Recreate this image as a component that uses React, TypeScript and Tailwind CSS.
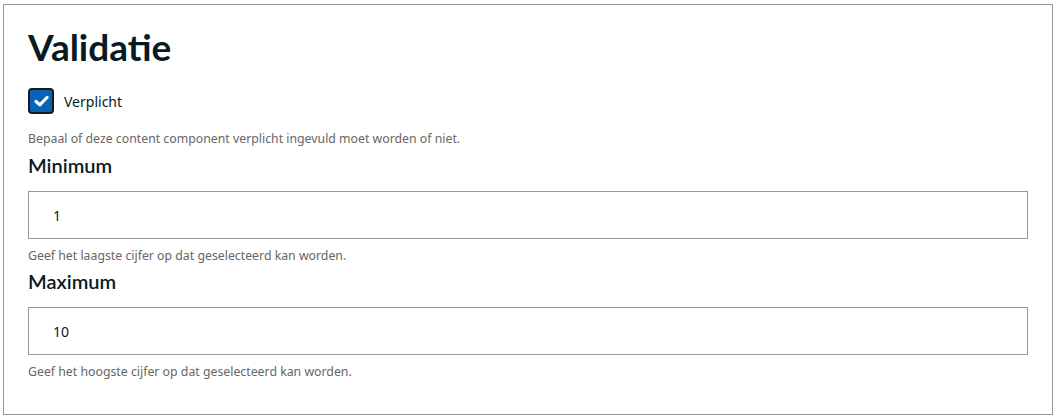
import React from "react";

function Check() {
  return (
    <span className="flex h-[26px] w-[26px] items-center justify-center rounded-[4px] border-2 border-[#1a1a1a] bg-[#0863b6]">
      <svg width="15" height="12" viewBox="0 0 15 12" fill="none">
        <path d="M2 6.5 L5.8 9.8 L13 2.5" stroke="#fff" strokeWidth="3.2" strokeLinecap="round" strokeLinejoin="round" />
      </svg>
    </span>
  );
}

function Field({ label, value, help }: { label: string; value: string; help: string }) {
  return (
    <div>
      <div className="h-[24px] text-[20px] font-semibold leading-[24px] text-[#0a1a24] [font-family:Lato,sans-serif]">{label}</div>
      <div className="mt-[14px] flex h-[48px] w-[1000px] items-center border border-[#999] pl-[24px] text-[14px] text-[#0a1a24] [font-family:'Noto_Sans',sans-serif]">
        {value}
      </div>
      <div className="mt-[9px] h-[16px] text-[12.3px] leading-[16px] text-[#666] [font-family:'Noto_Sans',sans-serif]">{help}</div>
    </div>
  );
}

export default function App() {
  return (
    <div className="bg-white pl-[3px] pt-[4px]">
      <div className="h-[411px] w-[1050px] border border-[#999] px-[24px] pt-[20px]">
        <h1 className="h-[44px] text-[37px] font-bold leading-[44px] text-[#0a1a24] [font-family:Lato,sans-serif]">Validatie</h1>
        <div className="mt-[19px] flex items-center gap-[10px]">
          <Check />
          <span className="text-[14px] text-[#0a1a24] [font-family:'Noto_Sans',sans-serif]">Verplicht</span>
        </div>
        <div className="mt-[17px] h-[16px] text-[12.3px] leading-[16px] text-[#666] [font-family:'Noto_Sans',sans-serif]">
          Bepaal of deze content component verplicht ingevuld moet worden of niet.
        </div>
        <div className="mt-[6px]">
          <Field label="Minimum" value="1" help="Geef het laagste cijfer op dat geselecteerd kan worden." />
        </div>
        <div className="mt-[5px]">
          <Field label="Maximum" value="10" help="Geef het hoogste cijfer op dat geselecteerd kan worden." />
        </div>
      </div>
    </div>
  );
}
